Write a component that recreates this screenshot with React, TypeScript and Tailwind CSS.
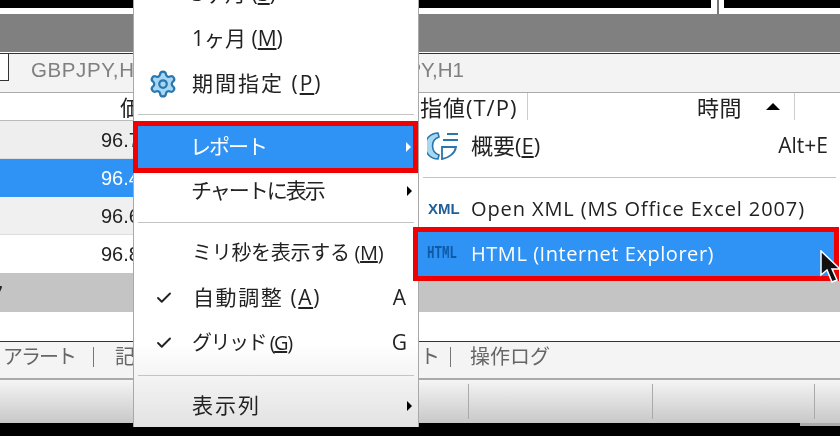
import { Check, Settings } from "lucide-react"

const font = "font-['Open_Sans','Noto_Sans_CJK_JP',sans-serif]"

const Arrow = ({ white }: { white?: boolean }) => (
    <svg width="5" height="10" viewBox="0 0 5 10" className={white ? "fill-white" : "fill-black"}>
        <path d="M0 0 L5 5 L0 10 Z" />
    </svg>
)

const Sep = ({ h, pt }: { h: string; pt: string }) => (
    <div className={`${h} ${pt} px-1`}>
        <div className="h-px bg-[#c4c4c4]" />
    </div>
)

const PriceRow = ({ text, className }: { text: string; className: string }) => (
    <div className={`flex items-center pl-[101px] text-[20px] leading-none font-['Liberation_Sans',sans-serif] ${className}`}>{text}</div>
)

const MainMenu = () => (
    <div className="absolute z-20 left-[133px] top-[-29px] w-[286px] h-[456px] flex flex-col border-l border-r border-[#a8a8a8] bg-gradient-to-b from-white from-[82%] to-[#e2e2e2] text-[#222] text-[21px]">
        <div className="h-[45px] flex items-center pl-[58px]">3ヶ月 (<u>3</u>)</div>
        <div className="h-[45px] flex items-center pl-[58px]">1ヶ月 (<u>M</u>)</div>
        <div className="h-[45px] flex items-center">
            <div className="w-[58px] flex justify-center pr-[1px]">
                <Settings size={30} strokeWidth={1.8} className="text-[#2a76ad] fill-[#a6d8f5]" />
            </div>
            <span className="tracking-[2px]">期間指定 (<u>P</u>)</span>
        </div>
        <Sep h="h-[15px]" pt="pt-[8px]" />
        <div className="h-[52px] -ml-px border-[5px] border-[#f00000] bg-[#2f92f5] text-white flex items-center justify-between pl-[52px] pr-[2px]">
            <span className="tracking-[-2px]">レポート</span>
            <Arrow white />
        </div>
        <div className="h-[36px] flex items-center justify-between pl-[57px] pr-[6px]">
            <span className="tracking-[-2px]">チャートに表示</span>
            <Arrow />
        </div>
        <Sep h="h-[22px]" pt="pt-[13px]" />
        <div className="h-[44px] flex items-center pl-[58px] text-[20px] tracking-[-0.3px]">ミリ秒を表示する (<u>M</u>)</div>
        <div className="h-[46px] flex items-center justify-between pl-[59px] pr-[12px]">
            <span className="tracking-[1.6px]">自動調整 (<u>A</u>)</span>
            <span>A</span>
        </div>
        <div className="h-[44px] flex items-center justify-between pl-[58px] pr-[11px]">
            <span className="text-[20px] tracking-[-1.5px]">グリッド (<u>G</u>)</span>
            <span>G</span>
        </div>
        <Sep h="h-[20px]" pt="pt-[10px]" />
        <div className="h-[42px] flex items-center justify-between pl-[58px] pr-[6px]">
            <span className="tracking-[2px]">表示列</span>
            <Arrow />
        </div>
    </div>
)

const SubMenu = () => (
    <div className="absolute z-30 left-[419px] top-[120px] w-[421px] h-[161px] flex flex-col bg-white text-[#222] text-[20px]">
        <div className="h-[52px] flex items-center justify-between pl-[8px] pr-[12px]">
            <div className="flex items-center">
                <svg width="32" height="28" viewBox="0 0 32 28" className="mr-[12px]">
                    <path d="M11 1 A13 13 0 0 0 11 27 L12 23 A9.5 9.5 0 0 1 12 5 Z" fill="#a6d8f5" stroke="#2a76ad" strokeWidth="1.6" />
                    <path d="M15 27 L15 15 L29 15 C28 21 22 26 15 27 Z" fill="#fff" stroke="#2a76ad" strokeWidth="1.8" />
                    <path d="M20 2 H31 M16 8 H31" stroke="#2a76ad" strokeWidth="2" />
                </svg>
                <span className="text-[22px] -mt-[2px]">概要(<u>E</u>)</span>
            </div>
            <span className="text-[21px]">Alt+E</span>
        </div>
        <Sep h="h-[19px]" pt="pt-[5px]" />
        <div className="h-[36px] flex items-center pl-[9px]">
            <span className="w-[43px] text-[15px] font-bold text-[#1f5f99] font-['Liberation_Sans',sans-serif]">XML</span>
            <span className="tracking-[0.9px]">Open XML (MS Office Excel 2007)</span>
        </div>
        <div className="h-[54px] -ml-[6px] mr-[1px] border-[5px] border-[#f00000] bg-[#2f92f5] text-white flex items-center pl-[9px]">
            <span className="w-[44px] text-[12.5px] font-bold text-[#0d5aa7] font-['Liberation_Mono',monospace] scale-y-150 origin-left">HTML</span>
            <span className="tracking-[0.55px]">HTML (Internet Explorer)</span>
        </div>
    </div>
)

const Cursor = () => (
    <svg width="22" height="36" viewBox="0 0 22 36" className="absolute z-40 left-[820px] top-[250px]">
        <path d="M1 1 L1 25 L7 20 L12 32 L17 30 L12 19 L20 19 Z" fill="#111" stroke="#fff" strokeWidth="1.5" />
    </svg>
)

const App = () => {
    return (
        <div className={`relative w-[840px] h-[436px] overflow-hidden bg-black flex flex-col ${font} blur-[0.4px]`}>
            {/* top panes */}
            <div className="h-[15px] flex bg-white border-b border-[#808080]">
                <div className="w-[711px] h-2 bg-black" />
                <div className="w-[13px] flex justify-center">
                    <div className="w-[2px] bg-[#777]" />
                </div>
                <div className="flex-1 h-2 bg-black" />
            </div>
            <div className="h-[37px] bg-[#808080]" />
            <div className="h-[2px] bg-white border-b border-[#333]" />

            {/* chart tabs */}
            <div className="h-[39px] bg-[#f3f3f3] border-b border-[#aaa]">
                <div className="h-[27px] flex items-center text-[20.5px] text-[#808080] leading-none pt-[6px] font-['Liberation_Sans',sans-serif] whitespace-nowrap">
                    <div className="w-[9px] h-[27px] -mt-[6px] bg-white border-r border-b border-[#333] mr-[22px]" />
                    <span className="w-[300px] tracking-[0.6px]">GBPJPY,H1</span>
                    <span className="w-[133px] text-right">USDJPY,H1</span>
                </div>
            </div>

            {/* table header */}
            <div className="h-[28px] bg-white border-b border-[#bbb] flex items-center text-[22px] text-[#222] leading-none whitespace-nowrap">
                <span className="pl-[120px] w-[133px] overflow-hidden">価格</span>
                <span className="pl-[287px] w-[395px] border-r border-[#ccc] h-full flex items-center tracking-[1px]">指値(T/P)</span>
                <span className="w-[238px] pl-[169px] tracking-[0.5px]">時間</span>
                <svg width="14" height="7" viewBox="0 0 14 7" className="fill-black">
                    <path d="M0 7 L7 0 L14 7 Z" />
                </svg>
                <div className="w-[15px] h-full border-r border-[#ccc]" />
            </div>

            {/* rows */}
            <PriceRow text="96.712" className="h-[38px] bg-[#eee] text-[#222] border-b border-[#ddd]" />
            <PriceRow text="96.412" className="h-[38px] bg-[#2f92f5] text-white" />
            <PriceRow text="96.612" className="h-[38px] bg-[#f0f0f0] text-[#222] border-b border-[#ddd]" />
            <PriceRow text="96.812" className="h-[38px] bg-white text-[#222]" />
            <div className="h-[39px] bg-[#c4c4c4] flex items-center text-[20px] font-bold text-[#222] leading-none -ml-[9px]">7</div>
            <div className="h-[29px] bg-white" />

            {/* terminal tabs */}
            <div className="h-[39px] bg-[#f4f4f4] border-t border-[#333] border-b-2 border-b-[#aaa] flex items-center pb-[6px] text-[20px] text-[#666] leading-none">
                <span className="pl-[3px] w-[93px] tracking-[-2px]">アラート</span>
                <div className="w-px h-[20px] bg-[#777]" />
                <span className="pl-[21px] w-[326px]">記事</span>
                <span className="w-[30px]">ト</span>
                <div className="w-px h-[20px] bg-[#777]" />
                <span className="pl-[19px]">操作ログ</span>
            </div>

            {/* status bar */}
            <div className="h-[43px] bg-gradient-to-b from-[#f5f5f5] to-[#c8c8c8] flex py-1">
                <div className="w-[469px] border-r border-[#aaa]" />
                <div className="w-[184px] border-r border-[#aaa]" />
                <div className="w-[162px] border-r border-[#aaa]" />
            </div>
            <div className="h-[3px] flex justify-end">
                <div className="w-[40px] bg-[#aaa]" />
            </div>

            <MainMenu />
            <SubMenu />
            <Cursor />

            {/* check marks */}
            <Check size={18} strokeWidth={2.5} className="absolute z-30 left-[155px] top-[289px] text-[#222]" />
            <Check size={18} strokeWidth={2.5} className="absolute z-30 left-[155px] top-[334px] text-[#222]" />
        </div>
    )
}

export default App
